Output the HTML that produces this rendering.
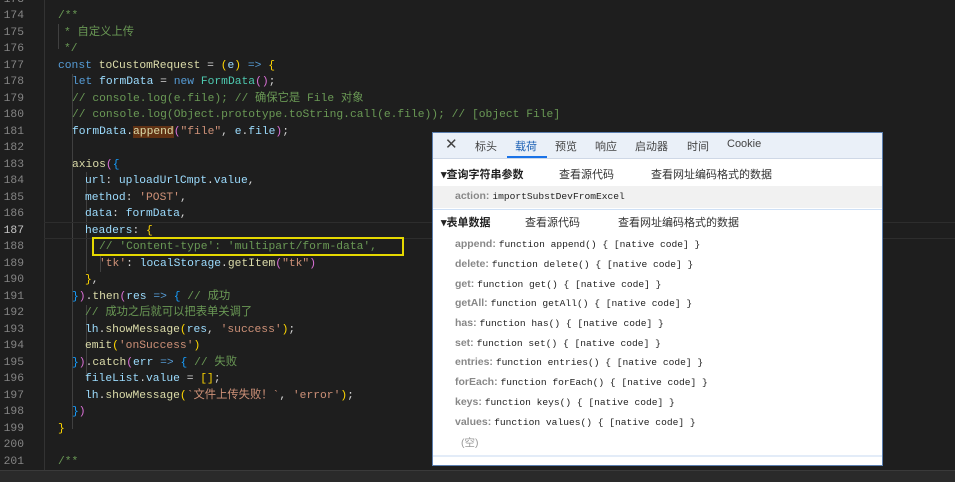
<!DOCTYPE html>
<html><head><meta charset="utf-8"><style>
*{margin:0;padding:0;box-sizing:border-box}
body{width:955px;height:482px;background:#1e1e1e;position:relative;overflow:hidden;font-family:"Liberation Mono","Noto Sans CJK SC",monospace;font-size:11.3px;color:#d4d4d4}
.ln{position:absolute;left:0;width:24px;text-align:right;color:#858585;height:16.5px;line-height:16.5px}
.cl{position:absolute;white-space:pre;height:16.5px;line-height:16.5px}
.k{color:#569cd6}.v{color:#9cdcfe}.f{color:#dcdcaa}.s{color:#ce9178}.c{color:#6a9955}.y{color:#ffd700}.p{color:#da70d6}.b{color:#179fff}
.g{position:absolute;width:1px;background:#404040}
#panel{position:absolute;left:432px;top:132px;width:451px;height:334px;background:#fff;border:1px solid #5b7fb0;font-family:"Liberation Sans","Noto Sans CJK SC",sans-serif;font-size:11px;color:#333}
.tabs{height:26px;background:#eaf0f8;border-bottom:1px solid #cfd8e6;position:relative}
.tab{position:absolute;top:5px;color:#444}
.sec{position:absolute;font-weight:bold;color:#222}
.sub{position:absolute;color:#333;font-weight:normal}
.it{position:absolute;left:22px;white-space:pre;font-size:10.5px}
.it b{color:#888;font-family:"Liberation Sans",sans-serif;font-weight:bold}
.it span{font-family:"Liberation Mono",monospace;font-size:9.6px;color:#222}
</style></head><body>
<div class="g" style="left:44px;top:0;height:470px;background:#333"></div>
<div class="g" style="left:58px;top:24px;height:25px"></div>
<div class="g" style="left:72px;top:74px;height:355px"></div>
<div class="g" style="left:86px;top:172px;height:100px"></div>
<div class="g" style="left:86px;top:305px;height:75px"></div>
<div class="g" style="left:100px;top:255px;height:17px"></div>
<div style="position:absolute;left:0;top:470px;width:955px;height:12px;background:#2a2a2a;border-top:1px solid #3a3a3a"></div>

<div class="ln" style="top:-8.5px">173</div>
<div class="ln" style="top:8px">174</div><div class="cl c" style="left:58px;top:8px">/**</div>
<div class="ln" style="top:24.5px">175</div><div class="cl c" style="left:64px;top:24.5px">* 自定义上传</div>
<div class="ln" style="top:41px">176</div><div class="cl c" style="left:64px;top:41px">*/</div>
<div class="ln" style="top:57.5px">177</div><div class="cl" style="left:58px;top:57.5px"><span class="k">const</span> <span class="f">toCustomRequest</span> = <span class="y">(</span><span class="v">e</span><span class="y">)</span> <span class="k">=&gt;</span> <span class="y">{</span></div>
<div class="ln" style="top:74px">178</div><div class="cl" style="left:72px;top:74px"><span class="k">let</span> <span class="v">formData</span> = <span class="k">new</span> <span style="color:#4ec9b0">FormData</span><span class="p">()</span>;</div>
<div class="ln" style="top:90.5px">179</div><div class="cl c" style="left:72px;top:90.5px">// console.log(e.file); // 确保它是 File 对象</div>
<div class="ln" style="top:107px">180</div><div class="cl c" style="left:72px;top:107px">// console.log(Object.prototype.toString.call(e.file)); // [object File]</div>
<div class="ln" style="top:123.5px">181</div><div class="cl" style="left:72px;top:123.5px"><span class="v">formData</span>.<span class="f" style="background:#613214">append</span><span class="p">(</span><span class="s">"file"</span>, <span class="v">e</span>.<span class="v">file</span><span class="p">)</span>;</div>
<div class="ln" style="top:140px">182</div>
<div class="ln" style="top:156.5px">183</div><div class="cl" style="left:72px;top:156.5px"><span class="f">axios</span><span class="p">(</span><span class="b">{</span></div>
<div class="ln" style="top:173px">184</div><div class="cl" style="left:85px;top:173px"><span class="v">url</span>: <span class="v">uploadUrlCmpt</span>.<span class="v">value</span>,</div>
<div class="ln" style="top:189.5px">185</div><div class="cl" style="left:85px;top:189.5px"><span class="v">method</span>: <span class="s">'POST'</span>,</div>
<div class="ln" style="top:206px">186</div><div class="cl" style="left:85px;top:206px"><span class="v">data</span>: <span class="v">formData</span>,</div>
<div style="position:absolute;left:44px;top:222px;width:911px;height:17px;border-top:1px solid #2d2d2d;border-bottom:1px solid #2d2d2d"></div>
<div class="ln" style="top:222.5px;color:#c6c6c6">187</div><div class="cl" style="left:85px;top:222.5px"><span class="v">headers</span>: <span class="y">{</span></div>
<div style="position:absolute;left:92px;top:237px;width:312px;height:19px;border:2px solid #e5d800"></div>
<div class="ln" style="top:239px">188</div><div class="cl c" style="left:99px;top:239px">// 'Content-type': 'multipart/form-data',</div>
<div class="ln" style="top:255.5px">189</div><div class="cl" style="left:99px;top:255.5px"><span class="s">'tk'</span>: <span class="v">localStorage</span>.<span class="f">getItem</span><span class="p">(</span><span class="s">"tk"</span><span class="p">)</span></div>
<div class="ln" style="top:272px">190</div><div class="cl" style="left:85px;top:272px"><span class="y">}</span>,</div>
<div class="ln" style="top:288.5px">191</div><div class="cl" style="left:72px;top:288.5px"><span class="b">}</span><span class="p">)</span>.<span class="f">then</span><span class="p">(</span><span class="v">res</span> <span class="k">=&gt;</span> <span class="b">{</span> <span class="c">// 成功</span></div>
<div class="ln" style="top:305px">192</div><div class="cl c" style="left:85px;top:305px">// 成功之后就可以把表单关调了</div>
<div class="ln" style="top:321.5px">193</div><div class="cl" style="left:85px;top:321.5px"><span class="v">lh</span>.<span class="f">showMessage</span><span class="y">(</span><span class="v">res</span>, <span class="s">'success'</span><span class="y">)</span>;</div>
<div class="ln" style="top:338px">194</div><div class="cl" style="left:85px;top:338px"><span class="f">emit</span><span class="y">(</span><span class="s">'onSuccess'</span><span class="y">)</span></div>
<div class="ln" style="top:354.5px">195</div><div class="cl" style="left:72px;top:354.5px"><span class="b">}</span><span class="p">)</span>.<span class="f">catch</span><span class="p">(</span><span class="v">err</span> <span class="k">=&gt;</span> <span class="b">{</span> <span class="c">// 失败</span></div>
<div class="ln" style="top:371px">196</div><div class="cl" style="left:85px;top:371px"><span class="v">fileList</span>.<span class="v">value</span> = <span class="y">[]</span>;</div>
<div class="ln" style="top:387.5px">197</div><div class="cl" style="left:85px;top:387.5px"><span class="v">lh</span>.<span class="f">showMessage</span><span class="y">(</span><span class="s">`文件上传失败！`</span>, <span class="s">'error'</span><span class="y">)</span>;</div>
<div class="ln" style="top:404px">198</div><div class="cl" style="left:72px;top:404px"><span class="b">}</span><span class="p">)</span></div>
<div class="ln" style="top:420.5px">199</div><div class="cl y" style="left:58px;top:420.5px">}</div>
<div class="ln" style="top:437px">200</div>
<div class="ln" style="top:453.5px">201</div><div class="cl c" style="left:58px;top:453.5px">/**</div>

<div id="panel">
 <div class="tabs">
  <div class="tab" style="left:12px;font-size:15px;top:2px;color:#444">✕</div>
  <div class="tab" style="left:42px">标头</div>
  <div class="tab" style="left:82px;color:#1a5fb4">载荷</div>
  <div style="position:absolute;left:74px;top:23px;width:40px;height:2px;background:#1a73e8"></div>
  <div class="tab" style="left:122px">预览</div>
  <div class="tab" style="left:162px">响应</div>
  <div class="tab" style="left:202px">启动器</div>
  <div class="tab" style="left:254px">时间</div>
  <div class="tab" style="left:294px">Cookie</div>
 </div>
 <div class="sec" style="left:8px;top:33px">▾查询字符串参数</div>
 <div class="sub" style="left:126px;top:33px">查看源代码</div>
 <div class="sub" style="left:218px;top:33px">查看网址编码格式的数据</div>
 <div style="position:absolute;left:0;top:53px;width:449px;height:22px;background:#f1f1f1"></div>
 <div class="it" style="top:57px"><b>action:</b> <span>importSubstDevFromExcel</span></div>
 <div style="position:absolute;left:0;top:76px;width:449px;height:1px;background:#cfe0f5"></div>
 <div class="sec" style="left:8px;top:81px">▾表单数据</div>
 <div class="sub" style="left:92px;top:81px">查看源代码</div>
 <div class="sub" style="left:185px;top:81px">查看网址编码格式的数据</div>
 <div class="it" style="top:105px"><b>append:</b> <span>function append() { [native code] }</span></div>
 <div class="it" style="top:125px"><b>delete:</b> <span>function delete() { [native code] }</span></div>
 <div class="it" style="top:144.5px"><b>get:</b> <span>function get() { [native code] }</span></div>
 <div class="it" style="top:164px"><b>getAll:</b> <span>function getAll() { [native code] }</span></div>
 <div class="it" style="top:184px"><b>has:</b> <span>function has() { [native code] }</span></div>
 <div class="it" style="top:203.5px"><b>set:</b> <span>function set() { [native code] }</span></div>
 <div class="it" style="top:223px"><b>entries:</b> <span>function entries() { [native code] }</span></div>
 <div class="it" style="top:243px"><b>forEach:</b> <span>function forEach() { [native code] }</span></div>
 <div class="it" style="top:263px"><b>keys:</b> <span>function keys() { [native code] }</span></div>
 <div class="it" style="top:283px"><b>values:</b> <span>function values() { [native code] }</span></div>
 <div class="it" style="top:302px;left:28px;color:#999">(空)</div>
 <div style="position:absolute;left:0;top:322px;width:449px;height:2px;background:#e3ecf8"></div>
</div>
</body></html>
